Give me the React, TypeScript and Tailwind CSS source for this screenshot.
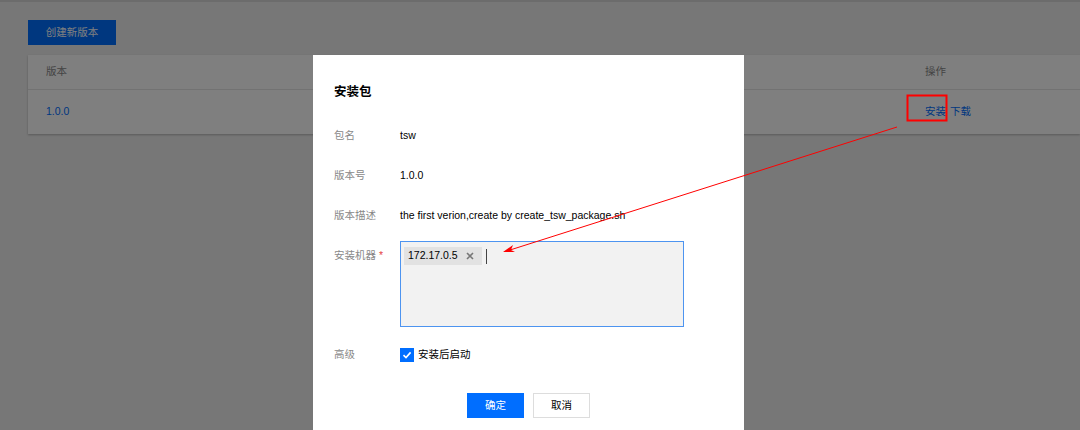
export default function App() {
  const font = { fontFamily: '"Liberation Sans", "Noto Sans CJK SC", sans-serif' };

  return (
    <div className="relative h-[430px] w-[1080px] overflow-hidden bg-[#eeeeee] text-[10.5px]" style={font}>
      {/* page behind the dialog */}
      <div className="flex flex-col px-[28px] pt-[20px]">
        <button className="h-[25px] w-[88px] bg-[#006eff] text-[10.5px] text-white">创建新版本</button>
        <div className="mt-[10px] -mr-[28px] bg-white shadow-[0_1px_2px_rgba(0,0,0,0.25)]">
          <div className="flex h-[35px] items-center border-b border-[#e5e5e5] text-[#888]">
            <span className="pl-[18px]">版本</span>
            <span className="ml-auto w-[155px]">操作</span>
          </div>
          <div className="flex h-[44px] items-center text-[#006eff]">
            <span className="pl-[18px]">1.0.0</span>
            <span className="ml-auto flex w-[155px] gap-[4px]">
              <span>安装</span>
              <span>下载</span>
            </span>
          </div>
        </div>
      </div>

      {/* mask */}
      <div className="absolute inset-0 border-t-2 border-[#6c6c6c] bg-black/50" />

      {/* dialog */}
      <div className="absolute left-[313px] top-[55px] flex h-[400px] w-[431px] flex-col bg-white pl-[21px] pt-[27px]">
        <div className="text-[12.5px] font-bold leading-5 text-black">安装包</div>
        <div className="mt-[14px] flex flex-col">
          <div className="flex h-10 items-center">
            <span className="w-[66px] text-[#888]">包名</span>
            <span className="text-black">tsw</span>
          </div>
          <div className="flex h-10 items-center">
            <span className="w-[66px] text-[#888]">版本号</span>
            <span className="text-black">1.0.0</span>
          </div>
          <div className="flex h-10 items-center">
            <span className="w-[66px] text-[#888]">版本描述</span>
            <span className="text-black">the first verion,create by create_tsw_package.sh</span>
          </div>
          <div className="mt-[5px] flex">
            <span className="w-[66px] pt-[4px] leading-5 text-[#888]">
              安装机器<span className="ml-[3px] text-[#e54545]">*</span>
            </span>
            <div className="h-[86px] w-[284px] border border-[#4d94f0] bg-[#f2f2f2] pl-[3px] pt-[5px]">
              <div className="flex items-center">
                <span className="flex h-[18px] items-center gap-[8px] bg-[#e2e2e2] pl-[4px] pr-[8px] text-black">
                  172.17.0.5
                  <svg width="8" height="8" viewBox="0 0 8 8" fill="none">
                    <path d="M1 1 L7 7 M7 1 L1 7" stroke="#777" strokeWidth="1.6" />
                  </svg>
                </span>
                <span className="ml-[4px] h-[15px] w-px bg-[#444]" />
              </div>
            </div>
          </div>
          <div className="mt-[8px] flex h-10 items-center">
            <span className="w-[66px] text-[#888]">高级</span>
            <span className="flex h-[14px] w-[14px] items-center justify-center bg-[#006eff]">
              <svg width="10" height="10" viewBox="0 0 10 10" fill="none">
                <path d="M1.5 5.2 L4 7.6 L8.6 2.4" stroke="white" strokeWidth="1.6" />
              </svg>
            </span>
            <span className="ml-[4px] text-black">安装后启动</span>
          </div>
        </div>
        <div className="mt-[18px] -ml-[21px] flex justify-center gap-[9px]">
          <button className="h-[25px] w-[57px] bg-[#006eff] text-[10.5px] text-white">确定</button>
          <button className="h-[25px] w-[57px] border border-[#dddddd] bg-white text-[10.5px] text-black">取消</button>
        </div>
      </div>

      {/* annotation */}
      <svg className="pointer-events-none absolute inset-0" width="1080" height="430" viewBox="0 0 1080 430">
        <rect x="907.5" y="95.5" width="39" height="25" fill="none" stroke="#ff0000" strokeWidth="2" />
        <line x1="897" y1="127" x2="510" y2="250" stroke="#ff0000" strokeWidth="1" />
        <path d="M503 252 L513 245 L511 250 L515 252 Z" fill="#ff0000" />
      </svg>
    </div>
  );
}
